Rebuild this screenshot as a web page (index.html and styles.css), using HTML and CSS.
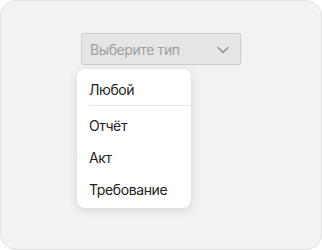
FILE: index.html
```html
<!DOCTYPE html>
<html lang="ru">

<head>
  <meta charset="UTF-8">
  <meta name="viewport" content="width=device-width, initial-scale=1.0">
  <title>Выбор типа</title>
  <link rel="stylesheet" href="styles.css">
</head>

<body>
  <div class="frame">
    <div class="select-wrap">
      <div class="select">
        <span class="placeholder">Выберите тип</span>
        <svg class="chevron" width="12" height="8" viewBox="0 0 12 8">
          <path d="M1 1.5 L6 6.5 L11 1.5" fill="none" stroke="#8c8c8c" stroke-width="1.3" stroke-linecap="round" stroke-linejoin="round"/>
        </svg>
      </div>
      <ul class="menu">
        <li>Любой</li>
        <li class="divider"></li>
        <li>Отчёт</li>
        <li>Акт</li>
        <li>Требование</li>
      </ul>
    </div>
  </div>
</body>

</html>
```

FILE: styles.css
```css
body {
  margin: 0;
  background-color: #ffffff;
  font-family: 'Inter', 'Roboto', sans-serif;
}

.frame {
  box-sizing: border-box;
  width: 322px;
  height: 250px;
  background-color: #f2f2f2;
  border: 1px solid #e2e2e2;
  border-radius: 16px;
  padding: 32px 0 0 76px;
}

.select-wrap {
  display: flex;
  flex-direction: column;
  align-items: flex-start;
}

.select {
  box-sizing: border-box;
  width: 160px;
  height: 32px;
  margin-left: 4px;
  display: flex;
  align-items: center;
  justify-content: space-between;
  padding: 0 11px 0 8px;
  background-color: #e5e5e5;
  border: 1px solid #cdcdcd;
  border-radius: 2px;
}

.placeholder {
  font-size: 14px;
  letter-spacing: -0.4px;
  color: #a0a0a0;
}

.chevron {
  margin-top: 1px;
}

.menu {
  list-style: none;
  box-sizing: border-box;
  width: 114px;
  margin: 4px 0 0;
  padding: 4px 0 3px;
  background-color: #ffffff;
  border-radius: 8px;
  box-shadow: 0 2px 10px rgba(0, 0, 0, 0.12);
}

.menu li {
  height: 32px;
  display: flex;
  align-items: center;
  padding: 0 12px;
  font-size: 14px;
  letter-spacing: -0.4px;
  color: #222222;
}

.menu .divider {
  height: 1px;
  padding: 0;
  margin: 0 0 3px 12px;
  background-color: #e6e6e6;
}
```
